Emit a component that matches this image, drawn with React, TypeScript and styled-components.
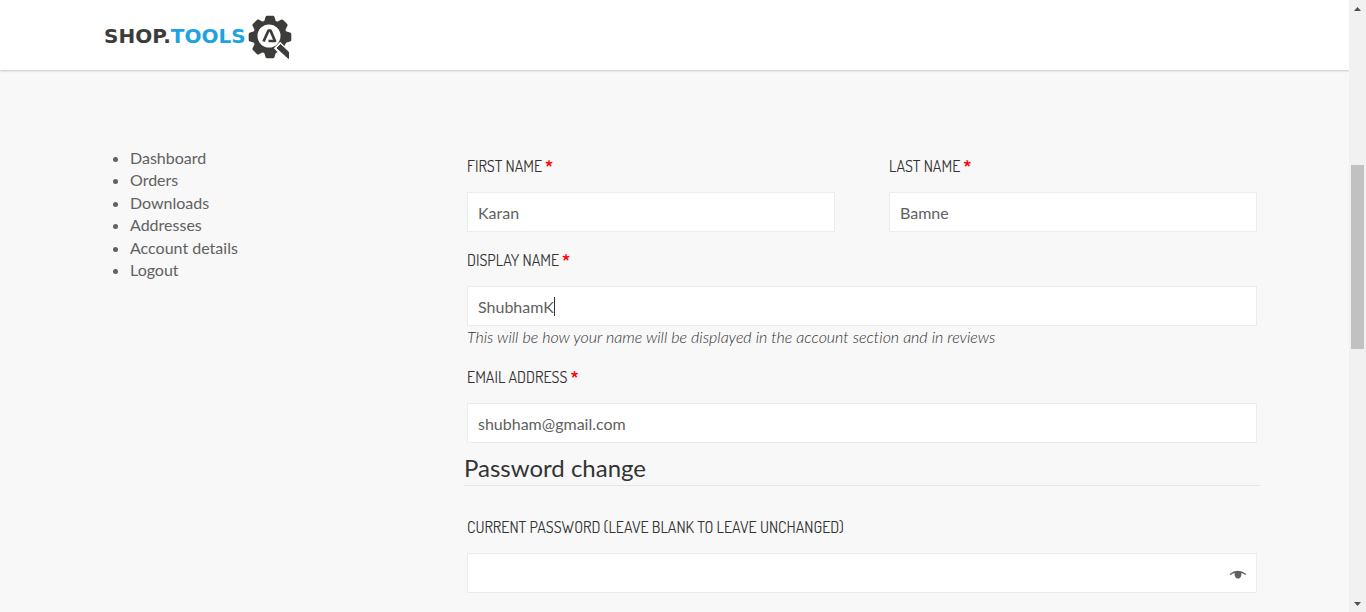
import React, { useState } from "react";
import styled, { createGlobalStyle } from "styled-components";

const GlobalStyle = createGlobalStyle`
  *, *::before, *::after { box-sizing: border-box; }
  body {
    margin: 0;
    background: #f8f8f8;
    color: #616161;
    font-family: Lato, "Liberation Sans", sans-serif;
    font-size: 16px;
    line-height: 22px;
  }
`;

const Shell = styled.div`
  display: flex;
  min-height: 100vh;
`;

const Page = styled.div`
  flex: 1;
  min-width: 0;
`;

const Header = styled.header`
  display: flex;
  align-items: center;
  height: 70px;
  padding: 0 104px;
  background: #fff;
  box-shadow: 0 1px 2px rgba(0, 0, 0, 0.2);
`;

const Logo = styled.a`
  display: flex;
  align-items: center;
  gap: 2px;
  padding-top: 3px;
  color: #3c3c3b;
  font: bold 20px/24px "DejaVu Sans", sans-serif;
  text-decoration: none;
`;

const LogoText = styled.span`
  padding-bottom: 2px;
`;

const LogoAccent = styled.span`
  color: #1fa3e0;
`;

const Content = styled.main`
  display: flex;
  padding: 77px 89px 19px 104px;
`;

const AccountNav = styled.nav`
  flex: 0 0 360px;
`;

const NavList = styled.ul`
  margin: 0;
  padding: 0 0 0 26px;
  line-height: 1.4;
`;

const NavLink = styled.a`
  color: inherit;
  text-decoration: none;
`;

const Form = styled.form`
  flex: 1;
  min-width: 0;
  padding-top: 7px;
`;

const Fields = styled.div`
  display: grid;
  gap: 16px;
  padding: 0 3px;
`;

const NameRow = styled.div`
  display: grid;
  grid-template-columns: 1fr 1fr;
  gap: 54px;
`;

const Label = styled.label`
  display: block;
  height: 24px;
  margin-bottom: 14px;
  color: #333;
  font-family: Dosis, "Roboto Condensed", "Noto Sans CJK SC", sans-serif;
  font-size: 16px;
  font-weight: 400;
  line-height: 24px;
  text-transform: uppercase;
`;

const Required = styled.span`
  color: #f00;
  font-weight: bold;
`;

const Control = styled.div`
  position: relative;
`;

const Input = styled.input`
  display: block;
  width: 100%;
  height: 40px;
  padding: 0 10px;
  border: 1px solid #ececec;
  border-radius: 0;
  outline: none;
  background: #fff;
  color: #616161;
  font: inherit;
`;

const Caret = styled.span`
  position: absolute;
  top: 11px;
  left: 87px;
  width: 1px;
  height: 19px;
  background: #333;
`;

const Hint = styled.em`
  display: block;
  margin-bottom: 2px;
  color: #333;
  font-weight: 300;
  font-variant-ligatures: none;
  line-height: 21px;
`;

const SectionTitle = styled.h2`
  margin: 8px 0 29px;
  border-bottom: 1px solid #e5e5e5;
  color: #333;
  font-size: 24px;
  font-weight: normal;
  line-height: 34px;
`;

const RevealButton = styled.button`
  position: absolute;
  top: 11px;
  right: 8px;
  display: flex;
  padding: 2px;
  border: 0;
  background: none;
  color: #616161;
`;

const ScrollTrack = styled.div`
  position: sticky;
  top: 0;
  display: flex;
  flex: 0 0 17px;
  flex-direction: column;
  align-items: center;
  justify-content: space-between;
  height: 100vh;
  padding: 7px 0 6px;
  background: #f1f1f1;
`;

const ScrollThumb = styled.div`
  position: absolute;
  top: 27%;
  left: 2px;
  width: 13px;
  height: 30%;
  background: #c1c1c1;
`;

function GearMark() {
  return (
    <svg width="44" height="44" viewBox="-22 -22 44 44" aria-hidden="true">
      <g fill="#3c3c3b">
        <circle r="17" />
        {[0, 45, 90, 180, 225, 270, 315].map((angle) => (
          <path
            key={angle}
            transform={`rotate(${angle})`}
            d="M-6-15 -4.500-20Q-4-21.300-3-21.300H3Q4-21.300 4.500-20L6-15Z"
          />
        ))}
      </g>
      <circle cx="-1" cy="-1" r="11.500" fill="#fff" />
      <path d="M7 8 21 22" stroke="#fff" strokeWidth="9" />
      <path d="M7 11 10.500 7.500 18.500 15V21.500Z" fill="#3c3c3b" stroke="#3c3c3b" />
      <path
        d="M-1.500 4H5L.5-6.500H-1.500L-6.500 4.500"
        fill="none"
        stroke="#3c3c3b"
        strokeWidth="2.700"
        strokeLinejoin="round"
      />
    </svg>
  );
}

function EyeIcon() {
  return (
    <svg width="18" height="18" viewBox="0 0 18 18" aria-hidden="true">
      <path
        d="M1 8.500Q8.500 2.500 17 8.500"
        fill="none"
        stroke="currentColor"
        strokeWidth="1.400"
      />
      <path d="M5.500 6.500Q9 4 12.500 6.500C12.500 10.500 11.500 12.500 9 12.500S5.500 10.500 5.500 6.500Z" fill="currentColor" />
    </svg>
  );
}

interface FieldProps {
  id: string;
  label: string;
  value?: string;
  type?: string;
  required?: boolean;
  hint?: string;
  active?: boolean;
  children?: React.ReactNode;
}

function Field({ id, label, value = "", type = "text", required, hint, active, children }: FieldProps) {
  const [text, setText] = useState(value);
  return (
    <div>
      <Label htmlFor={id}>
        {label} {required && <Required>*</Required>}
      </Label>
      <Control>
        <Input
          id={id}
          type={type}
          value={text}
          required={required}
          onChange={(event) => setText(event.target.value)}
        />
        {active && <Caret />}
        {children}
      </Control>
      {hint && <Hint>{hint}</Hint>}
    </div>
  );
}

const navItems = ["Dashboard", "Orders", "Downloads", "Addresses", "Account details", "Logout"];

export default function App() {
  const [revealed, setRevealed] = useState(false);
  return (
    <Shell>
      <GlobalStyle />
      <Page>
        <Header>
          <Logo href="#">
            <LogoText>
              SHOP.<LogoAccent>TOOLS</LogoAccent>
            </LogoText>
            <GearMark />
          </Logo>
        </Header>
        <Content>
          <AccountNav>
            <NavList>
              {navItems.map((item) => (
                <li key={item}>
                  <NavLink href="#">{item}</NavLink>
                </li>
              ))}
            </NavList>
          </AccountNav>
          <Form>
            <Fields>
              <NameRow>
                <Field id="first-name" label="First name" value="Karan" required />
                <Field id="last-name" label="Last name" value="Bamne" required />
              </NameRow>
              <Field
                id="display-name"
                label="Display name"
                value="ShubhamK"
                required
                active
                hint="This will be how your name will be displayed in the account section and in reviews"
              />
              <Field id="email" label="Email address" type="email" value="shubham@gmail.com" required />
            </Fields>
            <SectionTitle>Password change</SectionTitle>
            <Fields>
              <Field
                id="current-password"
                label="Current password (leave blank to leave unchanged)"
                type={revealed ? "text" : "password"}
              >
                <RevealButton
                  type="button"
                  aria-label="Show password"
                  onClick={() => setRevealed(!revealed)}
                >
                  <EyeIcon />
                </RevealButton>
              </Field>
            </Fields>
          </Form>
        </Content>
      </Page>
      <ScrollTrack aria-hidden="true">
        <svg width="7" height="4" viewBox="0 0 7 4">
          <path d="M0 4 3.500 0 7 4Z" fill="#505050" />
        </svg>
        <ScrollThumb />
        <svg width="7" height="4" viewBox="0 0 7 4">
          <path d="M0 0H7L3.500 4Z" fill="#505050" />
        </svg>
      </ScrollTrack>
    </Shell>
  );
}
